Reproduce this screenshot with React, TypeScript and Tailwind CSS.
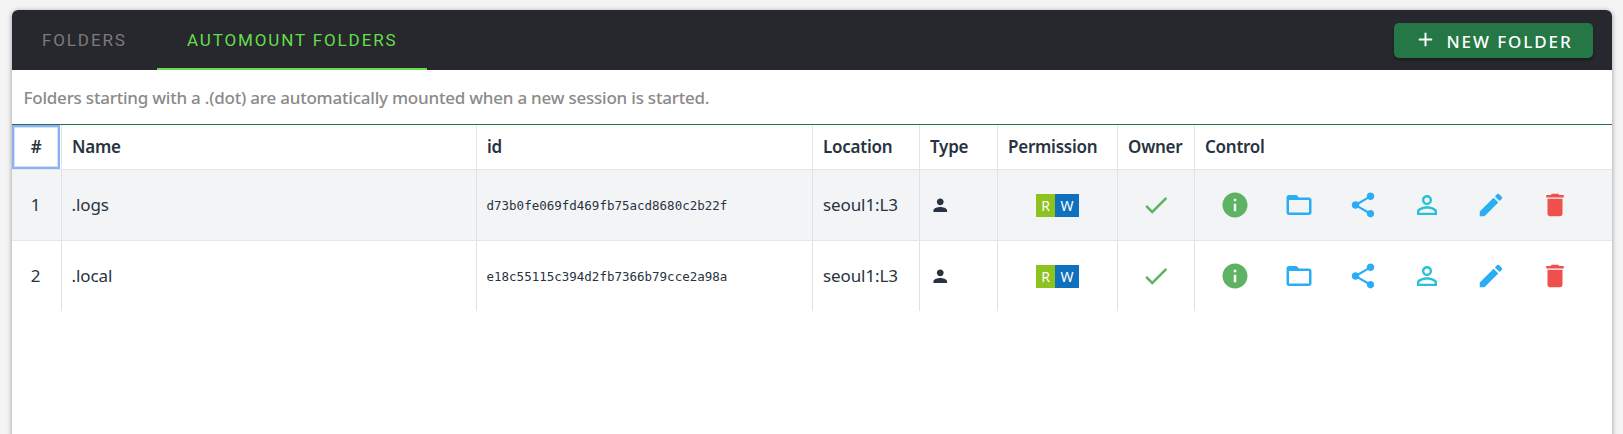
import type { ReactNode } from "react";
import {
  MdAdd,
  MdCheck,
  MdDelete,
  MdEdit,
  MdFolderOpen,
  MdInfo,
  MdPermIdentity,
  MdPerson,
  MdShare,
} from "react-icons/md";

const folders = [
  { name: ".logs", id: "d73b0fe069fd469fb75acd8680c2b22f", location: "seoul1:L3" },
  { name: ".local", id: "e18c55115c394d2fb7366b79cce2a98a", location: "seoul1:L3" },
];

const columns =
  "grid grid-cols-[50px_415px_336px_107px_78px_120px_77px_417px]";

function HeadCell({ children }: { children: ReactNode }) {
  return (
    <div className="flex items-center border-r border-[#e5e6ea] pl-2.5">{children}</div>
  );
}

function Cell({ children, className = "" }: { children: ReactNode; className?: string }) {
  return (
    <div className={`flex items-center border-r border-[#dfe1e5] ${className}`}>{children}</div>
  );
}

function Controls() {
  return (
    <div className="flex items-center gap-[34px] pl-[25.3px] text-[30px] text-[#29adf5]">
      <MdInfo className="text-[#5eb263]" />
      <MdFolderOpen />
      <MdShare />
      <MdPermIdentity className="text-[#27c0d8]" />
      <MdEdit />
      <MdDelete className="text-[#ef504d]" />
    </div>
  );
}

export default function App() {
  return (
    <div className="h-[434px] overflow-hidden bg-[#f4f4f4] px-3 pt-2.5 font-['Noto_Sans',sans-serif]">
      <main className="h-[440px] w-[1600px] overflow-hidden rounded-t-[6px] bg-white shadow-[0_1px_5px_rgba(0,0,0,0.4)]">
        <header className="flex h-[60px] w-[1600px] items-stretch justify-between bg-[#27282d] pr-[19px]">
          <nav className="flex font-[Roboto,sans-serif] text-[17px] tracking-[1.87px]">
            <button className="w-[145px] pt-0.5 pl-[30px] text-left text-[#7b7b7d]">FOLDERS</button>
            <button className="w-[270px] border-b-2 border-[#62df4b] pt-1 pl-[30px] text-left text-[#62df4b]">
              AUTOMOUNT FOLDERS
            </button>
          </nav>
          <button className="mt-[13px] flex h-[35px] w-[199px] items-center rounded-[5px] bg-[#257746] pl-5 text-[17px] font-medium tracking-[1.9px] whitespace-nowrap text-white shadow-[0_2px_3px_rgba(0,0,0,0.35)]">
            <MdAdd className="mr-[9.5px] mb-0.5 size-[23px]" />
            <span className="pt-0.5">NEW FOLDER</span>
          </button>
        </header>
        <p className="flex h-[54px] items-center pt-0.5 pl-[11.5px] text-[17px] font-medium tracking-[-0.22px] whitespace-nowrap text-[#8a8a8a]">
          Folders starting with a .(dot) are automatically mounted when a new session is started.
        </p>
        <section className="w-[1600px] border-t border-[#257746] text-[17px] tracking-[-0.1px] text-[#283341]">
          <div className={`${columns} h-[45px] border-b border-[#e5e6ea] font-semibold tracking-[-0.25px]`}>
            <div className="border-r border-[#e5e6ea] pr-px">
              <div className="flex h-11 items-center justify-center border-2 border-[#8cb2f5] ring-1 ring-[#d3e2fc] ring-inset">
                #
              </div>
            </div>
            <HeadCell>Name</HeadCell>
            <HeadCell>id</HeadCell>
            <HeadCell>Location</HeadCell>
            <HeadCell>Type</HeadCell>
            <HeadCell>Permission</HeadCell>
            <HeadCell>Owner</HeadCell>
            <div className="flex items-center pl-2.5">Control</div>
          </div>
          {folders.map((folder, index) => (
            <div
              key={folder.id}
              className={`${columns} ${index === 0 ? "h-[71px] border-b border-[#e5e6ea] bg-[#f3f4f6]" : "h-[70px]"}`}
            >
              <Cell className="justify-center pr-0.5">{index + 1}</Cell>
              <Cell className="pl-[9.5px]">{folder.name}</Cell>
              <Cell className="pt-0.5 pl-[9.5px] font-['DejaVu_Sans_Mono',monospace] text-[12.5px] tracking-normal">
                {folder.id}
              </Cell>
              <Cell className="pl-2.5">{folder.location}</Cell>
              <Cell className="pl-2.5">
                <MdPerson className="size-[20.5px]" />
              </Cell>
              <Cell className="justify-center text-[14px] tracking-normal text-white">
                <span className="flex h-[23px] w-[19px] items-center justify-center bg-[#8dc21f] pt-px">R</span>
                <span className="flex h-[23px] w-6 items-center justify-center bg-[#0f70bd] pt-px">W</span>
              </Cell>
              <Cell className="justify-center">
                <MdCheck className="size-[30px] text-[#5eb263]" />
              </Cell>
              <Controls />
            </div>
          ))}
        </section>
      </main>
    </div>
  );
}
